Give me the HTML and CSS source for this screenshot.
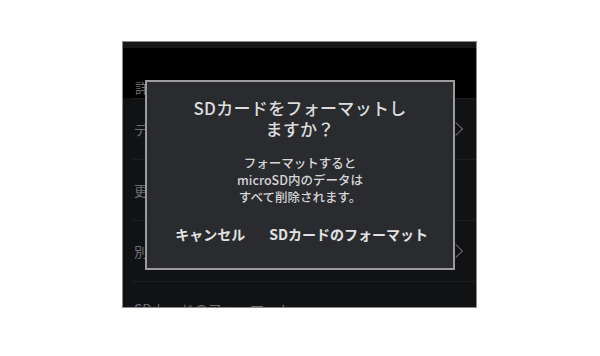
FILE: index.html
```html
<!DOCTYPE html>
<html lang="ja">
<head>
    <meta charset="UTF-8">
    <meta name="viewport" content="width=device-width, initial-scale=1.0">
    <title>SDカードのフォーマット</title>
    <link rel="stylesheet" href="styles.css">
</head>
<body>

    <div class="shot">
        <div class="statusbar"></div>
        <div class="section-head">
            <span class="section-label">詳細設定</span>
        </div>
        <div class="row">
            <span class="row-label">データ使用量の設定</span>
            <span class="chevron"></span>
        </div>
        <div class="row">
            <span class="row-label">更新の確認</span>
        </div>
        <div class="row">
            <span class="row-label">別のカメラを追加</span>
            <span class="chevron"></span>
        </div>
        <div class="row row-last">
            <span class="row-label">SDカードのフォーマット</span>
        </div>

        <!-- Confirm dialog -->
        <div class="dialog">
            <h2 class="dialog-title">SDカードをフォーマットし<br>ますか？</h2>
            <p class="dialog-text">フォーマットすると<br>microSD内のデータは<br>すべて削除されます。</p>
            <div class="dialog-actions">
                <button type="button">キャンセル</button>
                <button type="button">SDカードのフォーマット</button>
            </div>
        </div>
    </div>

</body>
</html>
```

FILE: styles.css
```css
body {
    margin: 0;
    background-color: #fff;
    font-family: "Noto Sans CJK JP", "Noto Sans", sans-serif;
    padding: 41px 0 0 122px;
}

.shot {
    position: relative;
    width: 353px;
    height: 265px;
    border: 1px solid #8c8c8c;
    background-color: #111214;
    overflow: hidden;
}

.statusbar {
    height: 6px;
    background-color: #171718;
}

.section-head {
    height: 50px;
    background-color: #000;
    padding-left: 12px;
    box-sizing: border-box;
    padding-top: 26px;
}

.section-label {
    color: #6f6f6f;
    font-size: 14px;
    line-height: 16px;
}

.row {
    height: 60px;
    border-top: 1px solid #1d1e21;
    margin-left: 10px;
    padding-right: 15px;
    display: flex;
    align-items: center;
    justify-content: space-between;
}

.row:first-of-type {
    border-top: none;
}

.row-last {
    align-items: flex-start;
    padding-top: 17px;
    box-sizing: border-box;
}

.row-label {
    color: #6e6e70;
    font-size: 14px;
    line-height: 20px;
    padding-left: 1px;
}

.chevron {
    width: 9px;
    height: 9px;
    border-top: 1.5px solid #6a6a6c;
    border-right: 1.5px solid #6a6a6c;
    transform: rotate(45deg);
}

.dialog {
    position: absolute;
    left: 22px;
    top: 38px;
    width: 306px;
    height: 186px;
    border: 2px solid #9b9b9b;
    background-color: #292b2e;
    text-align: center;
}

.dialog-title {
    margin: 15px 0 0;
    font-size: 17px;
    font-weight: 500;
    line-height: 21px;
    color: #dcdcdc;
    letter-spacing: 0.3px;
}

.dialog-text {
    margin: 15px 0 0;
    font-size: 12.5px;
    font-weight: 500;
    line-height: 17px;
    color: #d6d6d6;
}

.dialog-actions {
    display: flex;
    justify-content: flex-end;
    gap: 24px;
    padding-right: 25px;
    margin-top: 20px;
}

.dialog-actions button {
    background: none;
    border: none;
    padding: 0;
    font-family: inherit;
    font-size: 14px;
    font-weight: bold;
    line-height: 18px;
    color: #e2e2e2;
}
```
